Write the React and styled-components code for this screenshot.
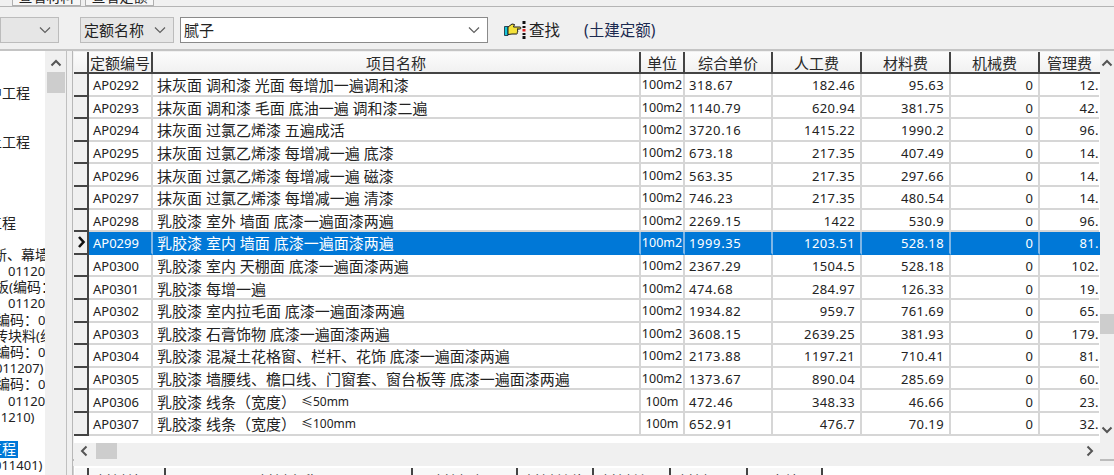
import React from "react";
import styled, { createGlobalStyle } from "styled-components";

const Global = createGlobalStyle`
  html, body { margin: 0; padding: 0; background: #f0f0f0; }
  * { box-sizing: border-box; }
`;
const FONT = `"Noto Sans", "Noto Sans CJK SC", sans-serif`;
const COLS = "15px 64px 488px 44px 88px 89px 89px 89px 59px";

const Page = styled.div`
  width: 1114px; height: 475px; overflow: hidden; background: #f0f0f0;
  font-family: ${FONT}; font-size: 14px; color: #222;
  display: flex; flex-direction: column;
`;
const TabStrip = styled.div`
  height: 7px; flex: none; display: flex; gap: 4px; padding-left: 12px;
  border-bottom: 1px solid #b4b4b4;
`;
const Tab = styled.div`
  width: 69px; height: 6px; display: flex; justify-content: center; align-items: flex-end;
  background: #f6f6f6; border: 1px solid #b0b0b0; border-top: 0; line-height: 16px;
  overflow: hidden;
`;
const Toolbar = styled.div`
  height: 44px; flex: none; display: flex; align-items: center;
  border-bottom: 2px solid #c4c4c4; font-size: 15px; padding-top: 3px;
`;
const Combo = styled.div`
  width: ${p => p.$w}px; height: 26px; margin-left: ${p => p.$ml || 0}px;
  display: flex; align-items: center; justify-content: space-between;
  background: ${p => (p.$white ? "#fff" : "#e6e6e6")};
  border: 1px solid ${p => (p.$white ? "#8a8a8a" : "#bcbcbc")};
  padding: 0 7px 0 3px; line-height: 20px;
`;
const Chevron = styled.svg`
  width: 12px; height: 8px; flex: none; fill: none; stroke: ${p => p.$c || "#606060"}; stroke-width: ${p => p.$sw || 1.2};
`;
const SideChevron = styled(Chevron)` width: 8px; height: 12px; `;
const FindButton = styled.div`
  display: flex; align-items: center; margin-left: 16px; width: 80px; font-size: 15.5px;
`;
const HandIcon = styled.svg` flex: none; margin-right: 3px; `;
const Kind = styled.div` color: #1c2a50; font-size: 15.5px; `;
const Main = styled.div`
  flex: 1; min-height: 0; display: flex;
`;
const TreePanel = styled.div`
  width: 73px; flex: none; display: flex;
  border-right: 1px solid #b8b8b8;
`;
const TreeBody = styled.div`
  width: 45px; flex: none; background: #fff; overflow: hidden; padding-top: 34px;
`;
const TreeRow = styled.div`
  height: 16.2px; line-height: 16px; white-space: nowrap;
  margin-left: ${p => p.$x || 0}px;
`;
const Num = styled.span` font-size: 13px; `;
const Picked = styled.span`
  display: inline-block; background: #0078d7; color: #fff; padding: 0 2px 0 0; height: 17px; line-height: 16px;
`;
const TreeScroll = styled.div`
  width: 22px; flex: none; display: flex; flex-direction: column; align-items: center; padding-top: 8px;
  border-right: 1px solid #c0c0c0;
`;
const ScrollThumb = styled.div`
  background: #cdcdcd; flex: none;
  width: ${p => p.$w}px; height: ${p => p.$h}px; margin-top: ${p => p.$mt || 0}px; margin-left: ${p => p.$ml || 0}px;
`;
const Right = styled.div`
  flex: 1; min-width: 0; display: flex; flex-direction: column;
`;
const GridPanel = styled.div`
  height: 410px; flex: none; display: flex; border-bottom: 2px solid #bcbcbc; padding-top: 1px; padding-left: 1px;
`;
const GridColumn = styled.div`
  width: 1026px; flex: none; display: flex; flex-direction: column; background: #fff;
`;
const Head = styled.div`
  display: grid; grid-template-columns: ${COLS}; height: 22px; flex: none;
  background: linear-gradient(#fcfcfc, #f1f1f1); border-bottom: 2px solid #444;
`;
const HeadCell = styled.div`
  display: flex; align-items: center; justify-content: center; overflow: hidden; white-space: nowrap;
  border-right: 2px solid #444; color: #2a2a2a; line-height: 20px; font-size: 15px; padding-top: 1px;
  &:last-child { border-right: 0; }
`;
const Row = styled.div`
  display: grid; grid-template-columns: ${COLS}; height: 22.6px; flex: none;
  background: ${p => (p.$on ? "#0078d7" : "#fff")}; color: ${p => (p.$on ? "#fff" : "#222")};
`;
const Marker = styled.div`
  background: #f0f0f0; border-right: 2px solid #444; border-bottom: 2px solid #444;
  display: flex; align-items: center; justify-content: flex-end; padding-right: 1px;
`;
const Cell = styled.div`
  display: flex; align-items: center; overflow: hidden; white-space: nowrap;
  justify-content: ${p => p.$a || "flex-start"};
  padding: ${p => (p.$a === "flex-end" ? "2px 5px 0 0" : p.$a === "center" ? "2px 0 0" : "2px 0 0 4px")};
  border-right: 2px solid ${p => (p.$on ? "#7fb6e6" : "#d6d6d6")};
  border-bottom: 2px solid ${p => (p.$on ? "#0078d7" : "#d6d6d6")};
  font-size: ${p => p.$fs || 13}px; letter-spacing: ${p => p.$ls || 0}px; line-height: 20px;
  &:last-child { border-right: 0; padding-right: 0; }
`;
const Small = styled.span` font-size: 12px; margin-left: 5px; `;
const HScroll = styled.div`
  flex: 1; display: flex; align-items: center; background: #f0f0f0; margin-top: 7px; padding: 0 6px 2px 6px;
`;
const HSpacer = styled.div` flex: 1; `;
const VScroll = styled.div`
  width: 14px; flex: none; display: flex; flex-direction: column; align-items: center; padding: 7px 0 25px;
`;
const Bottom = styled.div`
  flex: 1; margin-top: 5px; display: flex; align-items: flex-start; background: #fff; padding: 2px 0 0 1px;
  border-left: 1px solid #d0d0d0; overflow: hidden;
`;
const BottomHead = styled.div`
  display: flex; height: 22px; flex: none; background: #f8f8f8;
`;
const BottomCell = styled.div`
  width: ${p => p.$w}px; flex: none; text-align: center; line-height: 20px; padding-top: 3px;
  border-right: 2px solid #444; color: #2a2a2a; font-size: 15px;
`;

const Up = () => (
  <Chevron viewBox="0 0 12 8" $c="#555" $sw={2}><path d="M1.5 6.5 6 2l4.5 4.5" /></Chevron>
);
const Down = () => (
  <Chevron viewBox="0 0 12 8" $c="#555" $sw={2}><path d="M1.5 1.5 6 6l4.5-4.5" /></Chevron>
);
const Left = () => (
  <SideChevron viewBox="0 0 8 12" $c="#555" $sw={2}><path d="M6.5 1.5 2 6l4.5 4.5" /></SideChevron>
);
const Rgt = () => (
  <SideChevron viewBox="0 0 8 12" $c="#555" $sw={2}><path d="M1.5 1.5 6 6l-4.5 4.5" /></SideChevron>
);
const ComboArrow = () => (
  <Chevron viewBox="0 0 12 8"><path d="M1 1.5 6 6.5l5-5" /></Chevron>
);
const Hand = () => (
  <HandIcon width="22" height="18" viewBox="0 0 22 18">
    <path d="M0.5 5.5h3.5v9H0.5z" fill="#17c4d8" stroke="#123" strokeWidth="0.8" />
    <path d="M4 6 8 3l2.5.5-1 2.5h6.5c1.2 0 1.2 2 0 2H13c1.2 0 1.2 1.7 0 1.7 1 .3 1 1.7 0 1.7 .7 .4 .4 1.6-.5 1.6H8L4 13.5z" fill="#f4e23a" stroke="#1a1a1a" strokeWidth="1" strokeLinejoin="round" />
    <rect x="18.5" y="0" width="3" height="3" fill="#111" />
    <rect x="18.5" y="5" width="3" height="2" fill="#111" />
    <rect x="18.5" y="8" width="3" height="2.5" fill="#e02020" />
    <rect x="18.5" y="12" width="3" height="2" fill="#111" />
    <rect x="18.5" y="15" width="3" height="3" fill="#111" />
  </HandIcon>
);
const RowArrow = () => (
  <svg width="9" height="14" viewBox="0 0 9 14" fill="none" stroke="#111" strokeWidth="2.6">
    <path d="M2 2l4.5 5L2 12" />
  </svg>
);

const COLON = "\uFF1A";
const tree = [
  ["中工程", -12], [""], [""], ["土工程", -12], [""], [""], [""], [""], ["工程", -12], [""],
  ["新、幕墙", -7], ["01120", 8], ["板(编码" + COLON, -5], ["01120", 8], ["编码" + COLON + "0", -4],
  ["砖块料(组", -6], ["编码" + COLON + "0", -4], ["011207)", -5], ["编码" + COLON + "0", -4], ["01120", 8], ["011210)", -14], [""],
];
const mixed = t => t.split(/([0-9()]+)/).map((s, i) => (i % 2 ? <Num key={i}>{s}</Num> : s));

const A = "抹灰面 调和漆 ";
const B = "抹灰面 过氯乙烯漆 ";
const C = "乳胶漆 ";
const LINE = "线条\uFF08宽度\uFF09";
const rows = [
  ["AP0292", A + "光面 每增加一遍调和漆", "100m2", "318.67", "182.46", "95.63", "12."],
  ["AP0293", A + "毛面 底油一遍 调和漆二遍", "100m2", "1140.79", "620.94", "381.75", "42."],
  ["AP0294", B + "五遍成活", "100m2", "3720.16", "1415.22", "1990.2", "96."],
  ["AP0295", B + "每增减一遍 底漆", "100m2", "673.18", "217.35", "407.49", "14."],
  ["AP0296", B + "每增减一遍 磁漆", "100m2", "563.35", "217.35", "297.66", "14."],
  ["AP0297", B + "每增减一遍 清漆", "100m2", "746.23", "217.35", "480.54", "14."],
  ["AP0298", C + "室外 墙面 底漆一遍面漆两遍", "100m2", "2269.15", "1422", "530.9", "96."],
  ["AP0299", C + "室内 墙面 底漆一遍面漆两遍", "100m2", "1999.35", "1203.51", "528.18", "81."],
  ["AP0300", C + "室内 天棚面 底漆一遍面漆两遍", "100m2", "2367.29", "1504.5", "528.18", "102."],
  ["AP0301", C + "每增一遍", "100m2", "474.68", "284.97", "126.33", "19."],
  ["AP0302", C + "室内拉毛面 底漆一遍面漆两遍", "100m2", "1934.82", "959.7", "761.69", "65."],
  ["AP0303", C + "石膏饰物 底漆一遍面漆两遍", "100m2", "3608.15", "2639.25", "381.93", "179."],
  ["AP0304", C + "混凝土花格窗、栏杆、花饰 底漆一遍面漆两遍", "100m2", "2173.88", "1197.21", "710.41", "81."],
  ["AP0305", C + "墙腰线、檐口线、门窗套、窗台板等 底漆一遍面漆两遍", "100m2", "1373.67", "890.04", "285.69", "60."],
  ["AP0306", C + LINE, "100m", "472.46", "348.33", "46.66", "23.", "≤50mm"],
  ["AP0307", C + LINE, "100m", "652.91", "476.7", "70.19", "32.", "≤100mm"],
];
const heads = ["定额编号", "项目名称", "单位", "综合单价", "人工费", "材料费", "机械费", "管理费"];
const bottomCols = [
  ["", 14], ["材料编号", 77], ["材料名称", 247], ["材料型号", 105], ["材料单位", 76],
  ["材料单价", 77], ["材料用量", 77], ["配合编号", 75],
];

export default function App() {
  return (
    <Page>
      <Global />
      <TabStrip>
        <Tab>查看材料</Tab>
        <Tab>查看定额</Tab>
      </TabStrip>
      <Toolbar>
        <Combo $w={59}><span /><ComboArrow /></Combo>
        <Combo $w={94} $ml={21}><span>定额名称</span><ComboArrow /></Combo>
        <Combo $w={308} $ml={6} $white><span>腻子</span><ComboArrow /></Combo>
        <FindButton><Hand /><span>查找</span></FindButton>
        <Kind>(土建定额)</Kind>
      </Toolbar>
      <Main>
        <TreePanel>
          <TreeBody>
            {tree.map(([t, x], i) => <TreeRow key={i} $x={x}>{t && mixed(t)}</TreeRow>)}
            <TreeRow $x={-12}><Picked>工程</Picked></TreeRow>
            <TreeRow $x={-6}>{mixed("011401)")}</TreeRow>
          </TreeBody>
          <TreeScroll>
            <Up />
            <ScrollThumb $w={18} $h={21} $mt={5} />
          </TreeScroll>
        </TreePanel>
        <Right>
          <GridPanel>
            <GridColumn>
              <Head>
                <HeadCell />
                {heads.map(h => <HeadCell key={h}>{h}</HeadCell>)}
              </Head>
              {rows.map(r => {
                const on = r[0] === "AP0299";
                return (
                  <Row key={r[0]} $on={on}>
                    <Marker>{on && <RowArrow />}</Marker>
                    <Cell $on={on}>{r[0]}</Cell>
                    <Cell $on={on} $fs={15}>{r[1]}{r[7] && <Small>{r[7]}</Small>}</Cell>
                    <Cell $on={on} $a="center" $fs={12.5}>{r[2]}</Cell>
                    <Cell $on={on} $ls={0.6}>{r[3]}</Cell>
                    <Cell $on={on} $a="flex-end" $ls={0.4}>{r[4]}</Cell>
                    <Cell $on={on} $a="flex-end" $ls={0.4}>{r[5]}</Cell>
                    <Cell $on={on} $a="flex-end">0</Cell>
                    <Cell $on={on} $a="flex-end" $ls={0.4}>{r[6]}</Cell>
                  </Row>
                );
              })}
              <HScroll>
                <Left />
                <ScrollThumb $w={21} $h={16} $ml={8} />
                <HSpacer />
                <Rgt />
              </HScroll>
            </GridColumn>
            <VScroll>
              <Up />
              <ScrollThumb $w={14} $h={20} $mt={247} />
              <HSpacer />
              <Down />
            </VScroll>
          </GridPanel>
          <Bottom>
            <BottomHead>
              {bottomCols.map(([t, w], i) => <BottomCell key={i} $w={w}>{t}</BottomCell>)}
            </BottomHead>
          </Bottom>
        </Right>
      </Main>
    </Page>
  );
}
